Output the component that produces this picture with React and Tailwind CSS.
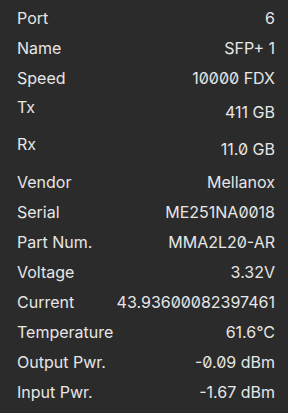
export default function App() {
  const rows = [
    { label: "Port", value: "6" },
    { label: "Name", value: "SFP+ 1" },
    { label: "Speed", value: "10000 FDX" },
    { label: "Tx", value: "411 GB", tall: true },
    { label: "Rx", value: "11.0 GB", tall: true },
    { label: "Vendor", value: "Mellanox" },
    { label: "Serial", value: "ME251NA0018" },
    { label: "Part Num.", value: "MMA2L20-AR" },
    { label: "Voltage", value: "3.32V" },
    { label: "Current", value: "43.93600082397461" },
    { label: "Temperature", value: "61.6°C" },
    { label: "Output Pwr.", value: "-0.09 dBm" },
    { label: "Input Pwr.", value: "-1.67 dBm" },
  ]

  return (
    <div className="w-[288px] h-[413px] bg-[#2b2b2b] text-[#e6e6e6] font-['Inter',sans-serif] text-[16px] [font-feature-settings:'zero'] pt-[3px] pl-[17px] pr-[13px]">
      {rows.map((row) =>
        row.tall ? (
          <div key={row.label} className="flex justify-between items-center h-[37px]">
            <span className="self-start pt-[4px] leading-[20px]">{row.label}</span>
            <span className="leading-[20px]">{row.value}</span>
          </div>
        ) : (
          <div key={row.label} className="flex justify-between items-center h-[30px]">
            <span className="leading-[20px]">{row.label}</span>
            <span className="leading-[20px]">{row.value}</span>
          </div>
        )
      )}
    </div>
  )
}
